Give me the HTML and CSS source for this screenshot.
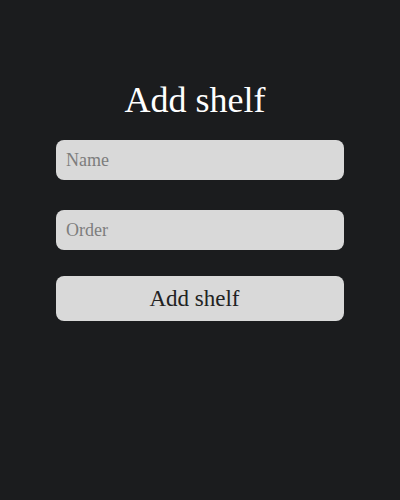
FILE: index.html
```html
<!DOCTYPE html>
<html>
<head>
<meta charset="utf-8">
<link rel="stylesheet" href="styles.css">
</head>
<body>
<main class="page">
  <form class="shelf-form">
    <h1 class="title">Add shelf</h1>
    <input class="field" type="text" placeholder="Name">
    <input class="field field-order" type="text" placeholder="Order">
    <button class="submit" type="button">Add shelf</button>
  </form>
</main>
</body>
</html>
```
FILE: styles.css
```css
html, body {
  margin: 0;
  padding: 0;
  background: #1b1c1e;
  height: 100%;
}
.page {
  font-family: "Liberation Serif", serif;
  display: flex;
  justify-content: center;
  padding-top: 80px;
}
.shelf-form {
  width: 288px;
  display: flex;
  flex-direction: column;
}
.title {
  margin: 0 0 20px 0;
  padding-right: 10px;
  color: #ffffff;
  font-weight: normal;
  font-size: 36px;
  line-height: 40px;
  text-align: center;
}
.field {
  box-sizing: border-box;
  height: 40px;
  border: none;
  border-radius: 8px;
  background: #d9d9d9;
  padding: 0 10px;
  font-family: "Liberation Serif", serif;
  font-size: 18px;
  color: #222;
  outline: none;
}
.field::placeholder {
  color: #7d7d7d;
}
.field-order {
  margin-top: 30px;
}
.submit {
  margin-top: 26px;
  height: 45px;
  border: none;
  border-radius: 8px;
  background: #d9d9d9;
  padding: 0 11px 0 0;
  font-family: "Liberation Serif", serif;
  font-size: 23px;
  color: #222;
}
```
